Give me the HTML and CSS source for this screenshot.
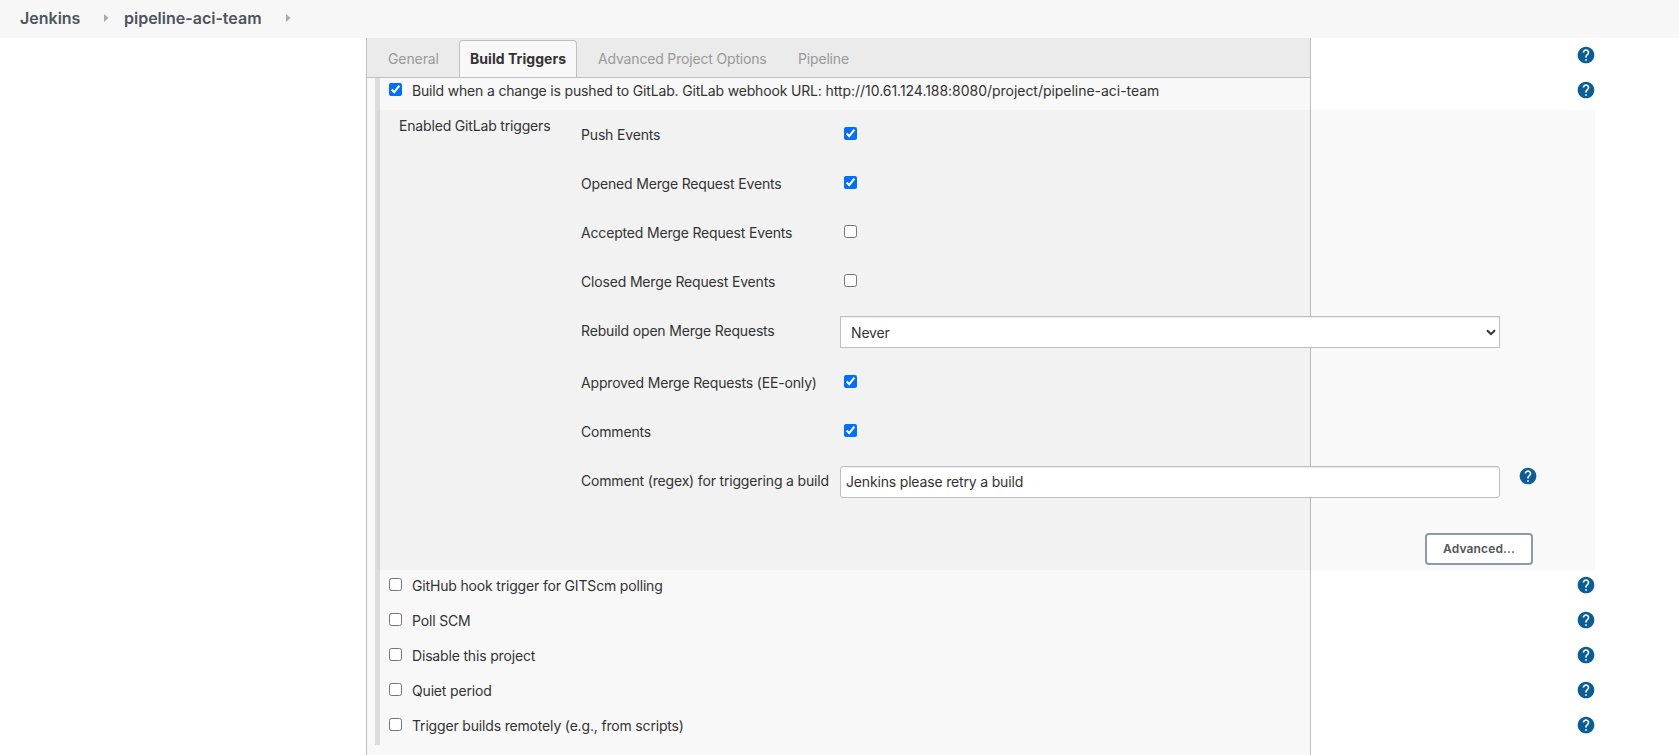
FILE: index.html
```html
<!DOCTYPE html>
<html lang="en">
<head>
<meta charset="utf-8">
<title>pipeline-aci-team Config [Jenkins]</title>
<link rel="stylesheet" href="styles.css">
</head>
<body>
<svg class="defs" width="0" height="0">
  <symbol id="help" viewBox="0 0 24 24">
    <path fill="#0b5d98" d="M12 2C6.48 2 2 6.48 2 12s4.480 10 10 10 10-4.480 10-10S17.520 2 12 2z"/>
    <path fill="#fff" d="M13 19h-2v-2h2v2zm2.070-7.750l-.9.920C13.450 12.900 13 13.500 13 15h-2v-.5c0-1.100.45-2.100 1.170-2.830l1.240-1.260c.37-.36.590-.86.590-1.410 0-1.100-.9-2-2-2s-2 .9-2 2H8c0-2.210 1.790-4 4-4s4 1.790 4 4c0 .88-.36 1.680-.93 2.250z"/>
  </symbol>
</svg>
<header class="breadcrumbs">
  <span class="crumb crumb-root">Jenkins</span>
  <svg class="arrow" viewBox="0 0 5 8"><path d="M0 0l4.500 4L0 8z"/></svg>
  <span class="crumb crumb-job">pipeline-aci-team</span>
  <svg class="arrow arrow-last" viewBox="0 0 5 8"><path d="M0 0l4.500 4L0 8z"/></svg>
</header>
<main class="panel">
  <div class="tabline">
    <nav class="tabs">
      <span class="tab tab-general">General</span>
      <span class="tab tab-active">Build Triggers</span>
      <span class="tab tab-options">Advanced Project Options</span>
      <span class="tab">Pipeline</span>
    </nav>
    <svg class="help"><use href="#help"/></svg>
  </div>
  <section class="section">
    <div class="row row-first"><input type="checkbox" checked><label class="grow">Build when a change is pushed to GitLab. GitLab webhook URL: <span class="url">http://10.61.124.188:8080/project/pipeline-aci-team</span></label><svg class="help"><use href="#help"/></svg></div>
    <div class="block">
      <div class="block-title">Enabled GitLab triggers</div>
      <div class="fields">
        <div class="field"><label>Push Events</label><input type="checkbox" checked></div>
        <div class="field"><label>Opened Merge Request Events</label><input type="checkbox" checked></div>
        <div class="field"><label>Accepted Merge Request Events</label><input type="checkbox"></div>
        <div class="field"><label>Closed Merge Request Events</label><input type="checkbox"></div>
        <div class="field field-select"><label>Rebuild open Merge Requests</label><div class="control select"><span>Never</span><svg class="chevron" viewBox="0 0 10 7"><path d="M1 1.200l4 4 4-4"/></svg></div></div>
        <div class="field"><label>Approved Merge Requests (EE-only)</label><input type="checkbox" checked></div>
        <div class="field"><label>Comments</label><input type="checkbox" checked></div>
        <div class="field"><label>Comment (regex) for triggering a build</label><div class="control text">Jenkins please retry a build</div><svg class="help"><use href="#help"/></svg></div>
        <button class="advanced">Advanced...</button>
      </div>
    </div>
    <div class="row"><input type="checkbox"><label class="grow">GitHub hook trigger for GITScm polling</label><svg class="help"><use href="#help"/></svg></div>
    <div class="row"><input type="checkbox"><label class="grow">Poll SCM</label><svg class="help"><use href="#help"/></svg></div>
    <div class="row"><input type="checkbox"><label class="grow">Disable this project</label><svg class="help"><use href="#help"/></svg></div>
    <div class="row"><input type="checkbox"><label class="grow">Quiet period</label><svg class="help"><use href="#help"/></svg></div>
    <div class="row"><input type="checkbox"><label class="grow">Trigger builds remotely (e.g., from scripts)</label><svg class="help"><use href="#help"/></svg></div>
  </section>
</main>
</body>
</html>
```
FILE: styles.css
```css
* { box-sizing: border-box; }
body {
  margin: 0;
  height: 755px;
  overflow: hidden;
  background: #fff;
  color: #333;
  font: 14px/20px Inter, "Liberation Sans", sans-serif;
  letter-spacing: -0.17px;
  white-space: nowrap;
}
.defs { position: absolute; }

.breadcrumbs {
  display: flex;
  height: 38px;
  padding: 8px 20px 0;
  background: #f7f7f7;
  color: #4d545d;
  font-size: 16px;
  font-weight: 600;
  letter-spacing: 0;
}
.crumb-root { width: 84px; }
.crumb-job { width: 162px; margin-left: 15px; }
.arrow { width: 5px; height: 8px; margin-top: 6px; fill: #aaa; }

.panel {
  width: 945px;
  height: 717px;
  margin-left: 366px;
  border: solid #bfbfbf;
  border-width: 0 1px;
  background: #f8f8f8;
}
.tabline { display: flex; height: 40px; }
.tabs {
  display: flex;
  flex: none;
  width: 943px;
  padding: 2px 0 0 21px;
  border-bottom: 1px solid #bfbfbf;
  background: #ebebeb;
  color: #999;
}
.tab { padding-top: 9px; }
.tab-general { width: 71px; letter-spacing: -0.1px; }
.tab-active {
  width: 118px;
  margin-right: 21px;
  padding: 8px 0 0 10px;
  border: 1px solid #bfbfbf;
  border-bottom: 0;
  border-radius: 4px 4px 0 0;
  background: #f8f8f8;
  color: #333;
  font-weight: 700;
  letter-spacing: 0.05px;
}
.tab-options { width: 200px; }
.help { flex: none; width: 20px; height: 20px; }
.tabline .help { margin: 7px 0 0 266px; }

.section {
  width: 1220px;
  margin-left: 8px;
  border-left: 5px solid #ddd;
}
.row {
  display: flex;
  align-items: flex-start;
  height: 35px;
  padding-left: 9px;
}
.row-first { height: 32px; }
.row-first > * { transform: translateY(-3px); }
.url { letter-spacing: -0.03px; }
input { flex: none; width: 13px; height: 13px; margin: 8px 10px 0 0; accent-color: #006eff; }
.grow { flex: 1; padding-top: 6px; }
.row .help { margin: 5px -1px 0 0; }

.block {
  display: flex;
  height: 460px;
  margin-left: -3px;
  padding: 9px 0 0 22px;
  background: rgba(0, 0, 0, .025);
}
.block-title { width: 182px; margin-top: -3px; }
.field { display: flex; height: 49px; }
.field-select { height: 52px; }
.field label { width: 259px; padding-top: 6px; }
.field input { margin-left: 4px; }
.control {
  display: flex;
  align-items: center;
  width: 660px;
  height: 32px;
  margin-top: 1px;
  border: 1px solid #bfbfbf;
  background: #fff;
  box-shadow: inset 0 1px 1px rgba(0, 0, 0, .075);
}
.select { justify-content: space-between; padding: 2px 3px 0 10px; }
.chevron { width: 10px; height: 7px; margin-bottom: 2px; fill: none; stroke: #333; stroke-width: 2; }
.text { padding-left: 5px; border-radius: 3px; }
.field .help { margin: 1px 0 0 18px; }
.advanced {
  display: block;
  width: 108px;
  height: 32px;
  margin: 19px 0 0 844px;
  padding: 0 0 2px;
  border: 2px solid #8c9ba8;
  border-radius: 4px;
  background: #fff;
  color: #4d545d;
  font: 600 12px Inter, sans-serif;
  letter-spacing: 0.15px;
}
```
